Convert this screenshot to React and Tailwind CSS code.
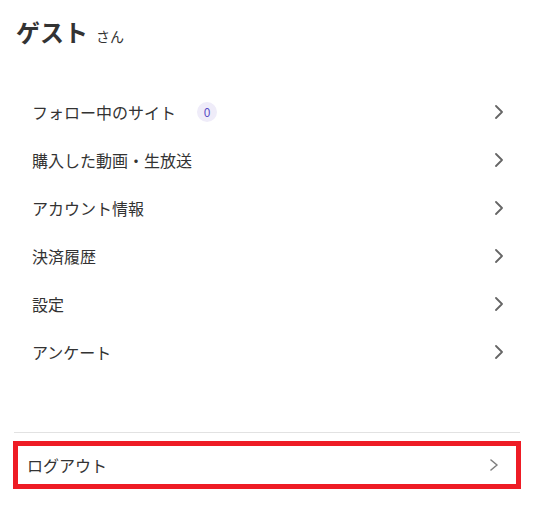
import React from 'react'

const ITEMS = [
  { label: 'フォロー中のサイト', badge: 0 },
  { label: '購入した動画・生放送' },
  { label: 'アカウント情報' },
  { label: '決済履歴' },
  { label: '設定' },
  { label: 'アンケート' },
]

function Chevron({ className = '', w = 6, h = 12, sw = 2 }) {
  return (
    <svg width={w + 2} height={h + 2} viewBox={`0 0 ${w + 2} ${h + 2}`} className={className} fill="none">
      <polyline
        points={`1,1 ${w + 1},${h / 2 + 1} 1,${h + 1}`}
        stroke="currentColor"
        strokeWidth={sw}
        strokeLinecap="round"
        strokeLinejoin="round"
      />
    </svg>
  )
}

export default function App() {
  return (
    <div
      className="w-[557px] h-[505px] bg-white text-[#333] overflow-hidden"
      style={{ fontFamily: '"Noto Sans CJK JP", "Noto Sans", sans-serif' }}
    >
      {/* Header */}
      <div className="pl-4 pt-[14px] flex items-baseline gap-2">
        <span className="text-[24px] font-bold leading-[36px]">ゲスト</span>
        <span className="text-[14px]">さん</span>
      </div>

      {/* Menu */}
      <ul className="mt-[38px] ml-4 w-[503px]">
        {ITEMS.map(item => (
          <li key={item.label} className="h-12 px-4 flex items-center justify-between cursor-pointer">
            <div className="flex items-center">
              <span className="text-[16px]">{item.label}</span>
              {item.badge !== undefined && (
                <span className="ml-[21px] w-5 h-5 rounded-full bg-[#efecf9] text-[#5a4cc6] text-[12px] flex items-center justify-center">
                  {item.badge}
                </span>
              )}
            </div>
            <Chevron className="text-[#666]" sw={1.8} />
          </li>
        ))}
      </ul>

      {/* Logout */}
      <div className="mt-[56px] ml-[14px] w-[506px] border-t border-[#e2e2e2]" />
      <div className="mt-2 ml-[13px] w-[508px] h-12 border-[5px] border-[#ee1c25] pl-[9px] pr-[18px] flex items-center justify-between">
        <span className="text-[16px]">ログアウト</span>
        <Chevron className="text-[#808080]" w={6} h={10} sw={1.6} />
      </div>
    </div>
  )
}
